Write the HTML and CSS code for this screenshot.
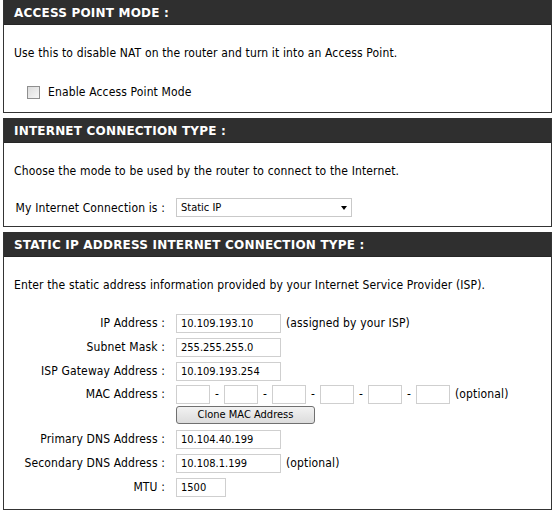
FILE: index.html
```html
<!DOCTYPE html>
<html>
<head>
<meta charset="utf-8">
<link rel="stylesheet" href="styles.css">
</head>
<body>
<div class="page">
  <div class="section">
    <h2 class="head">ACCESS POINT MODE :</h2>
    <div class="body body-ap">
      <p class="intro">Use this to disable NAT on the router and turn it into an Access Point.</p>
      <label class="check-row"><span class="checkbox"></span><span>Enable Access Point Mode</span></label>
    </div>
  </div>

  <div class="section">
    <h2 class="head">INTERNET CONNECTION TYPE :</h2>
    <div class="body body-ict">
      <p class="intro">Choose the mode to be used by the router to connect to the Internet.</p>
      <div class="row row-select">
        <span class="label">My Internet Connection is :</span>
        <div class="select"><span>Static IP</span><span class="arrow"></span></div>
      </div>
    </div>
  </div>

  <div class="section">
    <h2 class="head">STATIC IP ADDRESS INTERNET CONNECTION TYPE :</h2>
    <div class="body body-static">
      <p class="intro">Enter the static address information provided by your Internet Service Provider (ISP).</p>
      <div class="form">
        <div class="row"><span class="label">IP Address :</span><span class="input w104">10.109.193.10</span><span class="note">(assigned by your ISP)</span></div>
        <div class="row"><span class="label">Subnet Mask :</span><span class="input w104">255.255.255.0</span></div>
        <div class="row"><span class="label">ISP Gateway Address :</span><span class="input w104">10.109.193.254</span></div>
        <div class="row row-mac"><span class="label">MAC Address :</span>
          <span class="input w34"></span><span class="dash">-</span>
          <span class="input w34"></span><span class="dash">-</span>
          <span class="input w34"></span><span class="dash">-</span>
          <span class="input w34"></span><span class="dash">-</span>
          <span class="input w34"></span><span class="dash">-</span>
          <span class="input w34"></span><span class="note">(optional)</span>
        </div>
        <div class="row row-btn"><span class="label"></span><span class="button">Clone MAC Address</span></div>
        <div class="row row-dns"><span class="label">Primary DNS Address :</span><span class="input w104">10.104.40.199</span></div>
        <div class="row"><span class="label">Secondary DNS Address :</span><span class="input w104">10.108.1.199</span><span class="note">(optional)</span></div>
        <div class="row"><span class="label">MTU :</span><span class="input w49">1500</span></div>
      </div>
    </div>
  </div>
</div>
</body>
</html>
```

FILE: styles.css
```css
html, body {
  margin: 0;
  padding: 0;
  background: #ffffff;
}
body {
  font-family: "DejaVu Sans Condensed", "Liberation Sans", Arial, sans-serif;
  font-size: 12px;
  letter-spacing: 0.14px;
  color: #000;
}
.page {
  width: 549px;
  padding: 0 0 0 3px;
}
.section {
  border: 1px solid #343434;
  border-top: 0;
  margin-bottom: 5px;
}
.head {
  margin: 0;
  height: 25px;
  line-height: 26px;
  background: #2f2f2f;
  color: #ffffff;
  font-family: "DejaVu Sans", Verdana, sans-serif;
  font-weight: bold;
  font-size: 12px;
  letter-spacing: 0.2px;
  padding-left: 10px;
  border-bottom: 1px solid #262626;
  box-sizing: border-box;
}
.intro {
  margin: 0;
  padding-left: 10px;
  line-height: 14px;
}
.body-ap {
  padding-top: 21px;
  padding-bottom: 12px;
}
.check-row {
  display: flex;
  align-items: center;
  height: 16px;
  margin-top: 24px;
  padding-left: 23px;
}
.checkbox {
  width: 11px;
  height: 11px;
  border: 1px solid #8f8f8f;
  background: linear-gradient(135deg, #dcdcdc, #f6f6f6);
  margin-right: 8px;
}
.body-ict {
  padding-top: 21px;
  padding-bottom: 7px;
}
.row {
  display: flex;
  align-items: center;
  height: 24px;
}
.row-select {
  margin-top: 18px;
  height: 23px;
}
.label {
  width: 161px;
  text-align: right;
  flex: none;
  margin-right: 11px;
  white-space: nowrap;
}
.select {
  width: 170px;
  height: 17px;
  border: 1px solid #c9c9c9;
  display: flex;
  align-items: center;
  justify-content: space-between;
  padding-left: 4px;
  box-sizing: content-box;
  font-size: 11px;
  letter-spacing: 0;
}
.select .arrow {
  width: 0;
  height: 0;
  border-left: 3.5px solid transparent;
  border-right: 3.5px solid transparent;
  border-top: 4px solid #000;
  margin-right: 4px;
  margin-top: 1px;
}
.body-static {
  padding-top: 21px;
  padding-bottom: 10px;
}
.form {
  margin-top: 19px;
}
.input {
  height: 17px;
  border: 1px solid #cfcfcf;
  background: #fff;
  font-size: 11px;
  letter-spacing: 0;
  line-height: 17px;
  padding-left: 4px;
  box-sizing: content-box;
  flex: none;
}
.w104 { width: 99px; }
.w34 { width: 28px; }
.w49 { width: 44px; }
.note {
  margin-left: 5px;
}
.dash {
  width: 14px;
  text-align: center;
}
.row-mac {
  height: 22px;
}
.row-btn {
  height: 20px;
}
.button {
  width: 137px;
  height: 16px;
  border: 1px solid #707070;
  border-radius: 3px;
  background: linear-gradient(#f2f2f2, #dcdcdc);
  font-size: 11px;
  letter-spacing: 0;
  line-height: 16px;
  text-align: center;
}
.row-dns {
  margin-top: 2px;
}
```
